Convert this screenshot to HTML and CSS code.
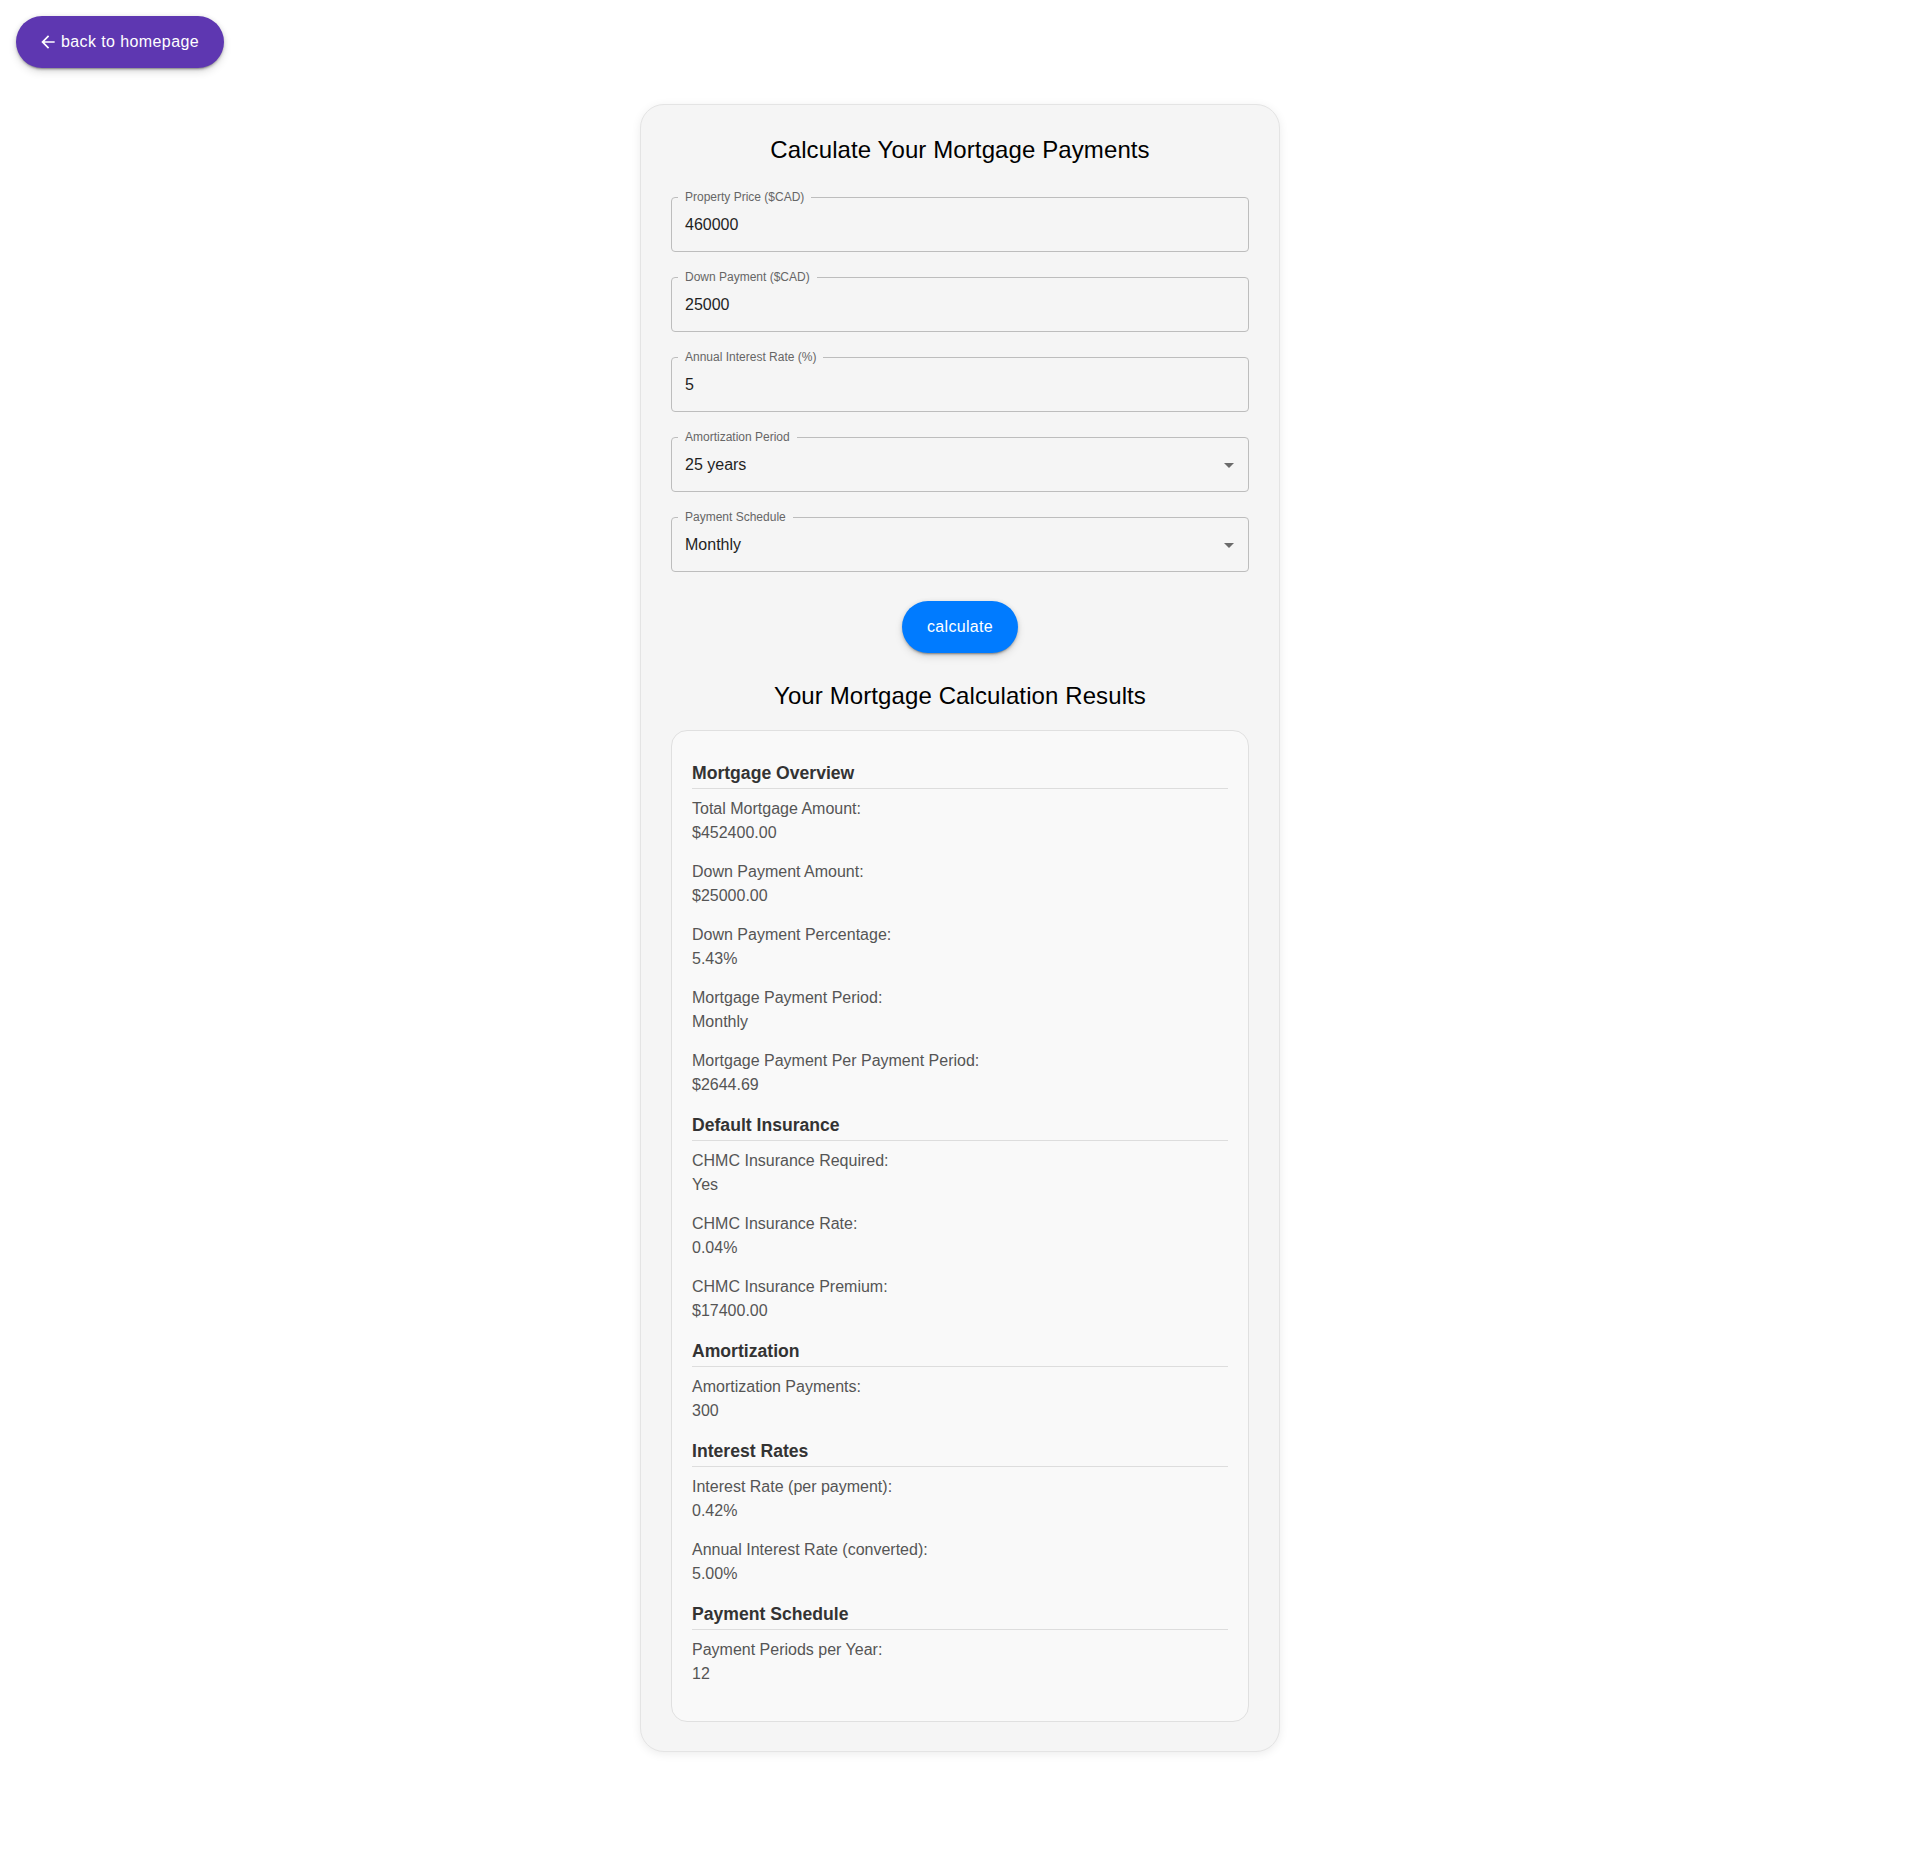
FILE: index.html
```html
<!DOCTYPE html>
<html lang="en">
<head>
<meta charset="utf-8">
<title>Mortgage Calculator</title>
<link rel="stylesheet" href="styles.css">
</head>
<body>
<div class="page">
  <div class="topbar">
    <a class="back-btn" href="#">
      <svg class="back-icon" viewBox="0 0 24 24" width="20" height="20"><path d="M20 11H7.83l5.59-5.59L12 4l-8 8 8 8 1.41-1.41L7.83 13H20z" fill="currentColor"/></svg>
      <span>back to homepage</span>
    </a>
  </div>

  <main class="card">
    <h1 class="title">Calculate Your Mortgage Payments</h1>

    <form class="form">
      <div class="field">
        <span class="field-label">Property Price ($CAD)</span>
        <span class="field-value">460000</span>
      </div>
      <div class="field">
        <span class="field-label">Down Payment ($CAD)</span>
        <span class="field-value">25000</span>
      </div>
      <div class="field">
        <span class="field-label">Annual Interest Rate (%)</span>
        <span class="field-value">5</span>
      </div>
      <div class="field field-select">
        <span class="field-label">Amortization Period</span>
        <span class="field-value">25 years</span>
        <svg class="dropdown" viewBox="0 0 24 24" width="24" height="24"><path d="M7 10l5 5 5-5z" fill="currentColor"/></svg>
      </div>
      <div class="field field-select">
        <span class="field-label">Payment Schedule</span>
        <span class="field-value">Monthly</span>
        <svg class="dropdown" viewBox="0 0 24 24" width="24" height="24"><path d="M7 10l5 5 5-5z" fill="currentColor"/></svg>
      </div>
      <div class="actions">
        <button class="calc-btn" type="button">calculate</button>
      </div>
    </form>

    <h2 class="results-title">Your Mortgage Calculation Results</h2>

    <section class="results">
      <h3 class="section-title">Mortgage Overview</h3>
      <div class="item"><div>Total Mortgage Amount:</div><div>$452400.00</div></div>
      <div class="item"><div>Down Payment Amount:</div><div>$25000.00</div></div>
      <div class="item"><div>Down Payment Percentage:</div><div>5.43%</div></div>
      <div class="item"><div>Mortgage Payment Period:</div><div>Monthly</div></div>
      <div class="item"><div>Mortgage Payment Per Payment Period:</div><div>$2644.69</div></div>

      <h3 class="section-title">Default Insurance</h3>
      <div class="item"><div>CHMC Insurance Required:</div><div>Yes</div></div>
      <div class="item"><div>CHMC Insurance Rate:</div><div>0.04%</div></div>
      <div class="item"><div>CHMC Insurance Premium:</div><div>$17400.00</div></div>

      <h3 class="section-title">Amortization</h3>
      <div class="item"><div>Amortization Payments:</div><div>300</div></div>

      <h3 class="section-title">Interest Rates</h3>
      <div class="item"><div>Interest Rate (per payment):</div><div>0.42%</div></div>
      <div class="item"><div>Annual Interest Rate (converted):</div><div>5.00%</div></div>

      <h3 class="section-title">Payment Schedule</h3>
      <div class="item"><div>Payment Periods per Year:</div><div>12</div></div>
    </section>
  </main>
</div>
</body>
</html>
```

FILE: styles.css
```css
* {
  box-sizing: border-box;
}

html, body {
  margin: 0;
  background: #ffffff;
  font-family: "Liberation Sans", Arial, sans-serif;
}

.page {
  padding: 16px;
}

.topbar {
  display: flex;
}

.back-btn {
  display: inline-flex;
  align-items: center;
  height: 52px;
  padding: 0 25px 0 22px;
  border-radius: 26px;
  background: #5e37b1;
  color: #ffffff;
  text-decoration: none;
  font-size: 16px;
  letter-spacing: 0.4px;
  line-height: 24px;
  box-shadow: 0 3px 1px -2px rgba(0,0,0,0.2), 0 2px 2px 0 rgba(0,0,0,0.14), 0 1px 5px 0 rgba(0,0,0,0.12), 0 4px 8px rgba(0,0,0,0.12);
}

.back-icon {
  display: block;
  margin-right: 3px;
}

.card {
  width: 640px;
  margin: 36px auto 0;
  padding: 31px 30px 29px;
  background: #f5f5f5;
  border: 1px solid #e4e4e4;
  border-radius: 24px;
  box-shadow: 0 2px 10px rgba(0,0,0,0.08);
}

.title {
  margin: 0 0 33px;
  font-size: 24px;
  font-weight: 400;
  line-height: normal;
  text-align: center;
  letter-spacing: 0.1px;
  color: #000000;
}

.form {
  display: flex;
  flex-direction: column;
  gap: 25px;
}

.field {
  position: relative;
  display: flex;
  align-items: center;
  height: 55px;
  padding: 0 7px 0 13px;
  border: 1px solid #bdbdbd;
  border-radius: 4px;
}

.field-label {
  position: absolute;
  left: 6px;
  top: -9px;
  padding: 0 7px;
  background: #f5f5f5;
  font-size: 12px;
  line-height: 16px;
  color: #666666;
}

.field-value {
  flex: 1;
  font-size: 16px;
  line-height: 23px;
  color: #1f1f1f;
}

.dropdown {
  display: block;
  color: #6b6b6b;
}

.actions {
  display: flex;
  justify-content: center;
  margin-top: 4px;
}

.calc-btn {
  height: 52px;
  padding: 0 25px;
  border: none;
  border-radius: 26px;
  background: #007bff;
  color: #ffffff;
  font-family: "Liberation Sans", Arial, sans-serif;
  font-size: 16px;
  line-height: 24px;
  letter-spacing: 0.3px;
  cursor: pointer;
  box-shadow: 0 3px 1px -2px rgba(0,0,0,0.2), 0 2px 2px 0 rgba(0,0,0,0.14), 0 1px 5px 0 rgba(0,0,0,0.12), 0 4px 8px rgba(0,0,0,0.1);
}

.results-title {
  margin: 29px 0 20px;
  font-size: 24px;
  font-weight: 400;
  line-height: normal;
  text-align: center;
  letter-spacing: 0.1px;
  color: #000000;
}

.results {
  padding: 14px 20px 20px;
  background: #f9f9f9;
  border: 1px solid #e0e0e0;
  border-radius: 16px;
}

.section-title {
  margin: 18px 0 8px;
  padding-bottom: 4px;
  border-bottom: 1px solid #dddddd;
  font-size: 17.6px;
  font-weight: 700;
  line-height: normal;
  color: #333333;
}

.item {
  margin-bottom: 15px;
  font-size: 16px;
  line-height: 24px;
  color: #555555;
}
```
